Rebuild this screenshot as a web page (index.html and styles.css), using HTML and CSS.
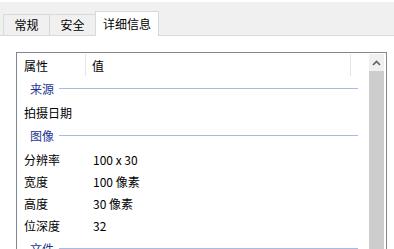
FILE: index.html
```html
<!DOCTYPE html>
<html lang="zh-CN">

<head>
    <meta charset="UTF-8">
    <title>属性 - 详细信息</title>
    <link rel="stylesheet" href="styles.css">
</head>

<body>
    <div class="tabs">
        <div class="tab">常规</div>
        <div class="tab">安全</div>
        <div class="tab active">详细信息</div>
    </div>

    <div class="panel">
        <div class="listview">
            <div class="list">
                <div class="header">
                    <div class="col name">属性</div>
                    <div class="col value">值</div>
                    <div class="col rest"></div>
                </div>

                <div class="group"><span>来源</span><div class="rule"></div></div>
                <div class="row"><div class="name">拍摄日期</div><div class="value"></div></div>

                <div class="group"><span>图像</span><div class="rule"></div></div>
                <div class="row"><div class="name">分辨率</div><div class="value">100 x 30</div></div>
                <div class="row"><div class="name">宽度</div><div class="value">100 像素</div></div>
                <div class="row"><div class="name">高度</div><div class="value">30 像素</div></div>
                <div class="row"><div class="name">位深度</div><div class="value">32</div></div>

                <div class="group"><span>文件</span><div class="rule"></div></div>
            </div>

            <div class="scrollbar">
                <div class="arrow">
                    <svg width="9" height="6" viewBox="0 0 9 6">
                        <path d="M1 5 L4.5 1.5 L8 5" fill="none" stroke="#606060" stroke-width="1.6"/>
                    </svg>
                </div>
                <div class="thumb"></div>
            </div>
        </div>
    </div>
</body>

</html>
```

FILE: styles.css
```css
body {
    margin: 0;
    font-family: "Noto Sans CJK SC", "Noto Sans", sans-serif;
    font-size: 12px;
    color: #000;
    background: #fff;
    overflow: hidden;
}

.tabs {
    height: 33px;
    margin-top: 2px;
    background: #f0f0f0;
    border-bottom: 1px solid #d9d9d9;
    display: flex;
    align-items: flex-end;
    padding-left: 3px;
}

.tab {
    height: 21px;
    width: 46px;
    box-sizing: border-box;
    border: 1px solid #d9d9d9;
    border-bottom: none;
    border-right: none;
    display: flex;
    align-items: center;
    justify-content: center;
    line-height: 1;
}

.tab.active {
    width: 64px;
    height: 25px;
    background: #fff;
    border-right: 1px solid #d9d9d9;
    margin-bottom: -1px;
    padding-bottom: 1px;
}

.panel {
    height: 213px;
    overflow: hidden;
    padding: 16px 7px 0 16px;
}

.listview {
    border: 1px solid #828790;
    height: 240px;
    display: flex;
}

.list {
    flex: 1;
}

.header {
    height: 23px;
    display: flex;
    align-items: stretch;
}

.header .col {
    display: flex;
    align-items: center;
    margin-top: 1px;
}

.header .name {
    width: 61px;
    padding-left: 7px;
    border-right: 1px solid #e5e5e5;
}

.header .value {
    width: 258px;
    padding-left: 6px;
    border-right: 1px solid #e5e5e5;
}

.header .rest {
    flex: 1;
}

.group {
    height: 25px;
    display: flex;
    align-items: center;
    padding-left: 13px;
    padding-right: 11px;
    color: #1e3791;
}

.group .rule {
    flex: 1;
    height: 1px;
    background: #a9bae6;
    margin-left: 5px;
}

.row {
    height: 22px;
    display: flex;
    align-items: center;
}

.row .name {
    width: 69px;
    padding-left: 7px;
}

.scrollbar {
    width: 17px;
    display: flex;
    flex-direction: column;
    padding-top: 1px;
}

.arrow {
    height: 17px;
    width: 15px;
    background: #f0f0f0;
    display: flex;
    align-items: center;
    justify-content: center;
}

.thumb {
    flex: 1;
    width: 15px;
    background: #cdcdcd;
}
```
